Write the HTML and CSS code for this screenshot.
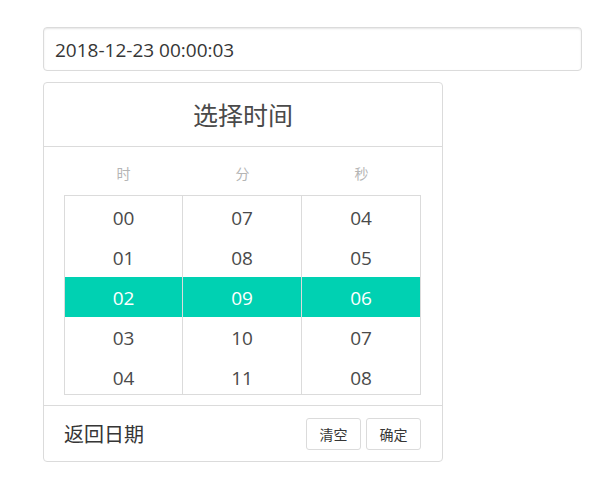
FILE: index.html
```html
<!DOCTYPE html>
<html>
<head>
<meta charset="utf-8">
<link rel="stylesheet" href="styles.css">
</head>
<body>
<div class="wrap">
  <div class="input">2018-12-23 00:00:03</div>
  <div class="panel">
    <div class="panel-head">选择时间</div>
    <div class="panel-body">
      <div class="labels">
        <span>时</span><span>分</span><span>秒</span>
      </div>
      <div class="table">
        <div class="col">
          <div class="cell">00</div>
          <div class="cell">01</div>
          <div class="cell active">02</div>
          <div class="cell">03</div>
          <div class="cell">04</div>
        </div>
        <div class="col">
          <div class="cell">07</div>
          <div class="cell">08</div>
          <div class="cell active">09</div>
          <div class="cell">10</div>
          <div class="cell">11</div>
        </div>
        <div class="col">
          <div class="cell">04</div>
          <div class="cell">05</div>
          <div class="cell active">06</div>
          <div class="cell">07</div>
          <div class="cell">08</div>
        </div>
      </div>
    </div>
    <div class="panel-foot">
      <span class="back">返回日期</span>
      <div class="btns">
        <button class="btn">清空</button>
        <button class="btn">确定</button>
      </div>
    </div>
  </div>
</div>
</body>
</html>
```
FILE: styles.css
```css
* { box-sizing: border-box; }
body {
  margin: 0;
  font-family: "Open Sans", "Noto Sans CJK SC", sans-serif;
  color: #4a4a4a;
  background: #fff;
}
.wrap {
  padding: 27px 0 0 43px;
  width: 582px;
}
.input {
  height: 44px;
  border: 1px solid #dbdbdb;
  border-radius: 4px;
  box-shadow: inset 0 1px 2px rgba(10,10,10,.1);
  font-size: 19px;
  line-height: 44px;
  padding-left: 11px;
  color: #363636;
}
.panel {
  margin-top: 11px;
  width: 400px;
  border: 1px solid #dbdbdb;
  border-radius: 4px;
}
.panel-head {
  height: 64px;
  border-bottom: 1px solid #dbdbdb;
  text-align: center;
  font-size: 25px;
  line-height: 64px;
  color: #4a4a4a;
}
.panel-body {
  padding: 0 21px 10px 20px;
  border-bottom: 1px solid #dbdbdb;
}
.labels {
  display: grid;
  grid-template-columns: 1fr 1fr 1fr;
  height: 48px;
  align-items: center;
  text-align: center;
  font-size: 14px;
  color: #b5b5b5;
  padding-top: 4px;
}
.table {
  display: grid;
  grid-template-columns: 117px 119px 119px;
  border: 1px solid #dbdbdb;
  height: 200px;
  overflow: hidden;
}
.col + .col { border-left: 1px solid #dbdbdb; }
.cell {
  height: 40px;
  line-height: 40px;
  padding-top: 1px;
  text-align: center;
  font-size: 19px;
  color: #4a4a4a;
}
.cell:first-child { height: 41px; padding-top: 2px; }
.cell.active {
  background: #00d1b2;
  color: #fff;
}
.panel-foot {
  height: 55px;
  display: flex;
  align-items: center;
  justify-content: space-between;
  padding: 0 21px 0 20px;
}
.back {
  font-size: 20px;
  color: #363636;
}
.btns { display: flex; gap: 5px; }
.btn {
  width: 55px;
  height: 32px;
  border: 1px solid #dbdbdb;
  border-radius: 3px;
  background: #fff;
  font-family: "Open Sans", "Noto Sans CJK SC", sans-serif;
  font-size: 14px;
  color: #363636;
  padding: 0;
}
```
